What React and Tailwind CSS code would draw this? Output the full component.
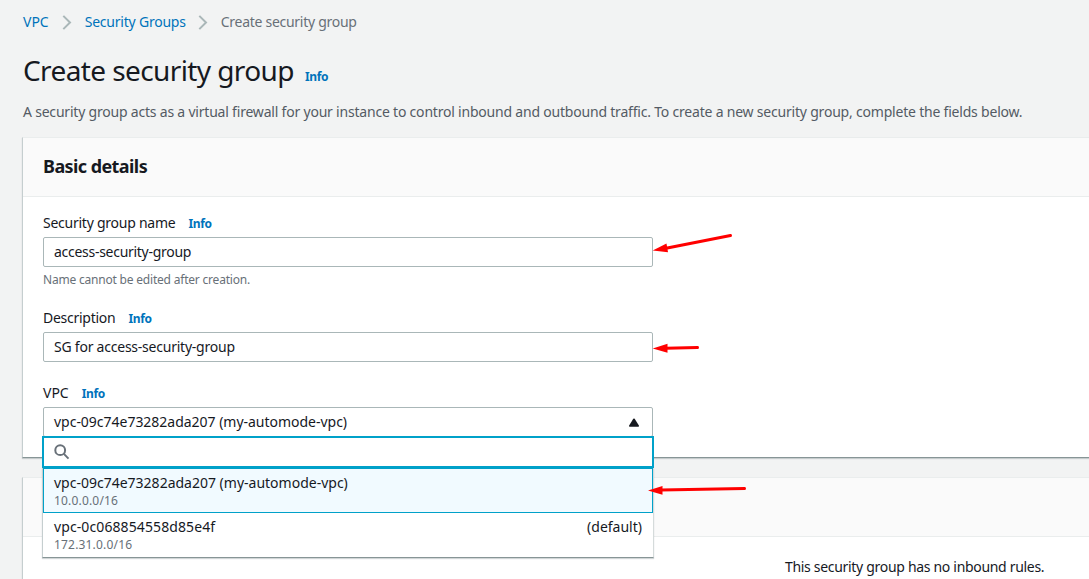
function Info({ className = "" }) {
  return (
    <a className={`text-[12px] leading-5 font-bold tracking-[-0.35px] text-[#0073bb] ${className}`}>
      Info
    </a>
  );
}

function Chevron({ className = "" }) {
  return (
    <svg
      className={`h-[15px] w-[10px] shrink-0 ${className}`}
      viewBox="0 0 10 15"
      fill="none"
      stroke="#aab7b8"
      strokeWidth="2"
    >
      <path d="M1.3 0.9 L8 7.5 L1.3 14.1" />
    </svg>
  );
}

function Label({ children, className }) {
  return (
    <div className="flex h-[22px] items-center">
      <span className={className}>{children}</span>
      <Info className="ml-[13px] pt-px" />
    </div>
  );
}

function Field({ children, className }) {
  return (
    <div
      className={`mt-[3px] flex h-[30px] w-[610px] items-center rounded-[2px] border border-[#aab7b8] bg-white px-[10px] ${className}`}
    >
      {children}
    </div>
  );
}

function Panel({ title, className, children }) {
  return (
    <section
      className={`-mr-px ml-[22px] border border-t-[#eaeded] border-r-[#d5dbdb] border-b-[#879596] border-l-[#c5cecf] bg-white shadow-[0_1px_1px_0_rgba(0,28,36,0.18)] ${className}`}
    >
      <header className="flex h-[59px] items-center border-b border-[#eaeded] bg-[#fafafa] pb-[2px] pl-5">
        {title && (
          <h2 className="text-[18px] leading-[22px] font-bold tracking-[-0.58px]">{title}</h2>
        )}
      </header>
      {children}
    </section>
  );
}

function VpcDropdown() {
  return (
    <div className="absolute top-[29px] -left-px z-10 w-[612px]">
      <div className="flex h-8 items-center border-2 border-[#00a1c9] bg-white pl-[10px]">
        <svg
          className="h-4 w-4"
          viewBox="0 0 16 16"
          fill="none"
          stroke="#687078"
          strokeWidth="2"
        >
          <circle cx="6.2" cy="6.2" r="4.9" />
          <path d="M9.9 9.9 L14.5 14.6" />
        </svg>
      </div>
      <div className="border border-t-0 border-r-[#d5dbdb] border-b-[#879596] border-l-[#c5cecf] bg-white shadow-[0_1px_1px_0_rgba(0,28,36,0.18)]">
        <div className="h-[45px] border border-[#00a1c9] bg-[#f1faff] px-[10px] pt-[3px]">
          <div className="leading-[21px]">vpc-09c74e73282ada207 (my-automode-vpc)</div>
          <div className="text-[12px] leading-[15px] tracking-[0.18px] text-[#687078]">10.0.0.0/16</div>
        </div>
        <div className="h-[44px] px-[11px] pt-[3px]">
          <div className="flex justify-between leading-[21px]">
            <span className="tracking-[0.1px]">vpc-0c068854558d85e4f</span>
            <span>(default)</span>
          </div>
          <div className="text-[12px] leading-[15px] tracking-[0.18px] text-[#687078]">172.31.0.0/16</div>
        </div>
      </div>
    </div>
  );
}

function Arrows() {
  return (
    <svg
      className="pointer-events-none absolute top-0 left-0 z-20 h-[579px] w-[1089px]"
      viewBox="0 0 1089 579"
      fill="#ff0000"
      stroke="#ff0000"
      strokeWidth="3"
      strokeLinecap="round"
    >
      <path d="M666 248.2 L730.5 235.5" />
      <path d="M652.7 250.6 L666.5 243.5 L668 252.3 Z" stroke="none" />
      <path d="M666 348.2 L697.5 347.6" />
      <path d="M652.7 348.5 L667.5 343.8 L667.5 352.8 Z" stroke="none" />
      <path d="M661 490 L744.5 488.6" />
      <path d="M648 490.6 L662.5 486 L662.5 494.8 Z" stroke="none" />
    </svg>
  );
}

export default function App() {
  return (
    <div className="relative h-[579px] overflow-hidden bg-[#f2f3f3] font-['Noto_Sans','Open_Sans',sans-serif] text-[14px] leading-[22px] text-[#16191f]">
      <nav className="flex h-11 items-center pl-[23px] text-[#0073bb]">
        <a>VPC</a>
        <Chevron className="ml-[13px]" />
        <a className="ml-[13px] tracking-[-0.22px]">Security Groups</a>
        <Chevron className="ml-[12px]" />
        <span className="ml-[13px] tracking-[-0.28px] text-[#687078]">Create security group</span>
      </nav>

      <div className="flex h-[56px] items-baseline pl-[23px]">
        <h1 className="text-[28px] leading-[53px] tracking-[-0.6px]">Create security group</h1>
        <Info className="ml-[11px]" />
      </div>

      <p className="mt-px ml-[23px] tracking-[-0.204px] whitespace-nowrap text-[#545b64]">
        A security group acts as a virtual firewall for your instance to control inbound and outbound
        traffic. To create a new security group, complete the fields below.
      </p>

      <Panel title="Basic details" className="mt-[14px] h-[321px]">
        <div className="pt-[15px] pl-5">
          <Label className="tracking-[-0.25px]">Security group name</Label>
          <Field className="tracking-[-0.28px]">access-security-group</Field>
          <p className="mt-[5px] text-[12px] leading-4 tracking-[-0.2px] text-[#687078]">
            Name cannot be edited after creation.
          </p>

          <div className="mt-[19px]">
            <Label className="tracking-[-0.27px]">Description</Label>
            <Field className="tracking-[-0.23px]">SG for access-security-group</Field>
          </div>

          <div className="mt-5">
            <Label>VPC</Label>
            <div className="relative">
              <Field className="justify-between">
                <span className="tracking-[-0.02px]">vpc-09c74e73282ada207 (my-automode-vpc)</span>
                <svg className="mr-[3px] h-[9px] w-[10px]" viewBox="0 0 10 9" fill="#16191f">
                  <path d="M4.3 0.8 Q5 0 5.7 0.8 L10 7.8 Q10.2 8.6 9.3 8.7 L0.7 8.7 Q-0.2 8.6 0 7.8 Z" />
                </svg>
              </Field>
              <VpcDropdown />
            </div>
          </div>
        </div>
      </Panel>

      <Panel className="mt-[19px] h-[160px]">
        <p className="pt-[19px] pl-[762px] tracking-[-0.31px] whitespace-nowrap">
          This security group has no inbound rules.
        </p>
      </Panel>

      <Arrows />
    </div>
  );
}
